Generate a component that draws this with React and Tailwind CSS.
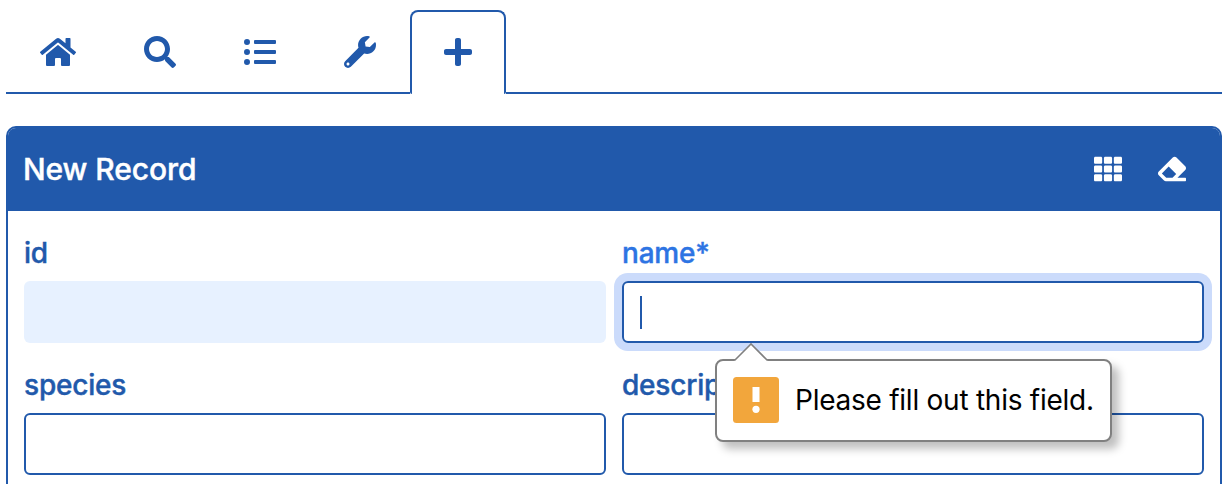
import { FaHome, FaSearch, FaListUl, FaWrench, FaPlus, FaTh, FaEraser } from "react-icons/fa";

function Tab({ children }) {
  return <div className="flex h-full items-center border-b-2 border-[#2159ab] px-[34px] pt-[2px]">{children}</div>;
}

function Field({ label, labelClass, boxClass, children }) {
  return (
    <div>
      <div className={"h-[44px] whitespace-nowrap text-[28px] leading-[44px] font-medium tracking-[-0.2px] [-webkit-text-stroke:0.4px_currentColor] " + labelClass}>{label}</div>
      <div className={"relative mt-[6px] h-[62px] rounded-[6px] " + boxClass}>{children}</div>
    </div>
  );
}

function Bubble() {
  return (
    <div className="absolute top-[76px] left-[91px] z-10 flex h-[83px] w-[397px] items-center rounded-[8px] border-2 border-[#808080] bg-white pl-4 shadow-[7px_7px_8px_rgba(0,0,0,0.25)]">
      <svg className="absolute -top-[18px] left-[16px]" width="36" height="19" viewBox="0 0 36 19">
        <path d="M1 19V18L18 1L35 18V19Z" fill="white" />
        <path d="M0 17H2L18 1L34 17H36" fill="none" stroke="#808080" strokeWidth="1.6" />
      </svg>
      <svg className="mb-px" width="46" height="46" viewBox="0 0 46 46">
        <rect width="46" height="46" rx="3.5" fill="#f2a63c" />
        <rect x="19.5" y="10" width="7" height="15" fill="white" />
        <circle cx="23" cy="32.3" r="3.6" fill="white" />
      </svg>
      <span className="mb-px ml-4 whitespace-nowrap text-[28px] tracking-[-0.25px] text-black">Please fill out this field.</span>
    </div>
  );
}

export default function App() {
  return (
    <div className="h-[484px] overflow-hidden bg-white px-[6px] pt-[10px] font-['Inter',sans-serif] text-[#2159ab]">
      <nav className="flex h-[84px] text-[32px]">
        <Tab><FaHome className="h-8 w-9" /></Tab>
        <Tab><FaSearch /></Tab>
        <Tab><FaListUl /></Tab>
        <Tab><FaWrench /></Tab>
        <div className="flex h-full w-24 items-center justify-center rounded-t-[8px] rounded-b-[2px] border-x-2 border-t-2 border-[#2159ab] pb-[2px]">
          <FaPlus className="h-8 w-7" />
        </div>
        <div className="flex-1 border-b-2 border-[#2159ab]" />
      </nav>
      <main className="mt-8 h-[380px] rounded-t-[10px] border-2 border-[#2159ab]">
        <header className="flex h-[83px] items-center justify-between rounded-t-[8px] bg-[#2159ab] pr-[34px] pl-4 text-white">
          <h1 className="-ml-px text-[30px] font-medium tracking-[-0.1px] [-webkit-text-stroke:0.4px_currentColor]">New Record</h1>
          <div className="flex gap-9 pb-[2px] text-[28px]">
            <FaTh />
            <FaEraser />
          </div>
        </header>
        <div className="grid grid-cols-2 gap-x-4 gap-y-5 px-4 pt-5">
          <Field label="id" labelClass="text-[#2159ab]" boxClass="bg-[#e7f1ff]" />
          <Field label="name*" labelClass="text-[#2d74e3]" boxClass="border-2 border-[#2159ab] shadow-[0_0_0_8px_#cbdbfb]">
            <div className="mt-[13px] ml-4 h-[33px] w-[2px] bg-[#2159ab]" />
            <Bubble />
          </Field>
          <Field label="species" labelClass="text-[#2159ab]" boxClass="border-2 border-[#2159ab]" />
          <Field label="description" labelClass="text-[#2159ab]" boxClass="border-2 border-[#2159ab]" />
        </div>
      </main>
    </div>
  );
}
